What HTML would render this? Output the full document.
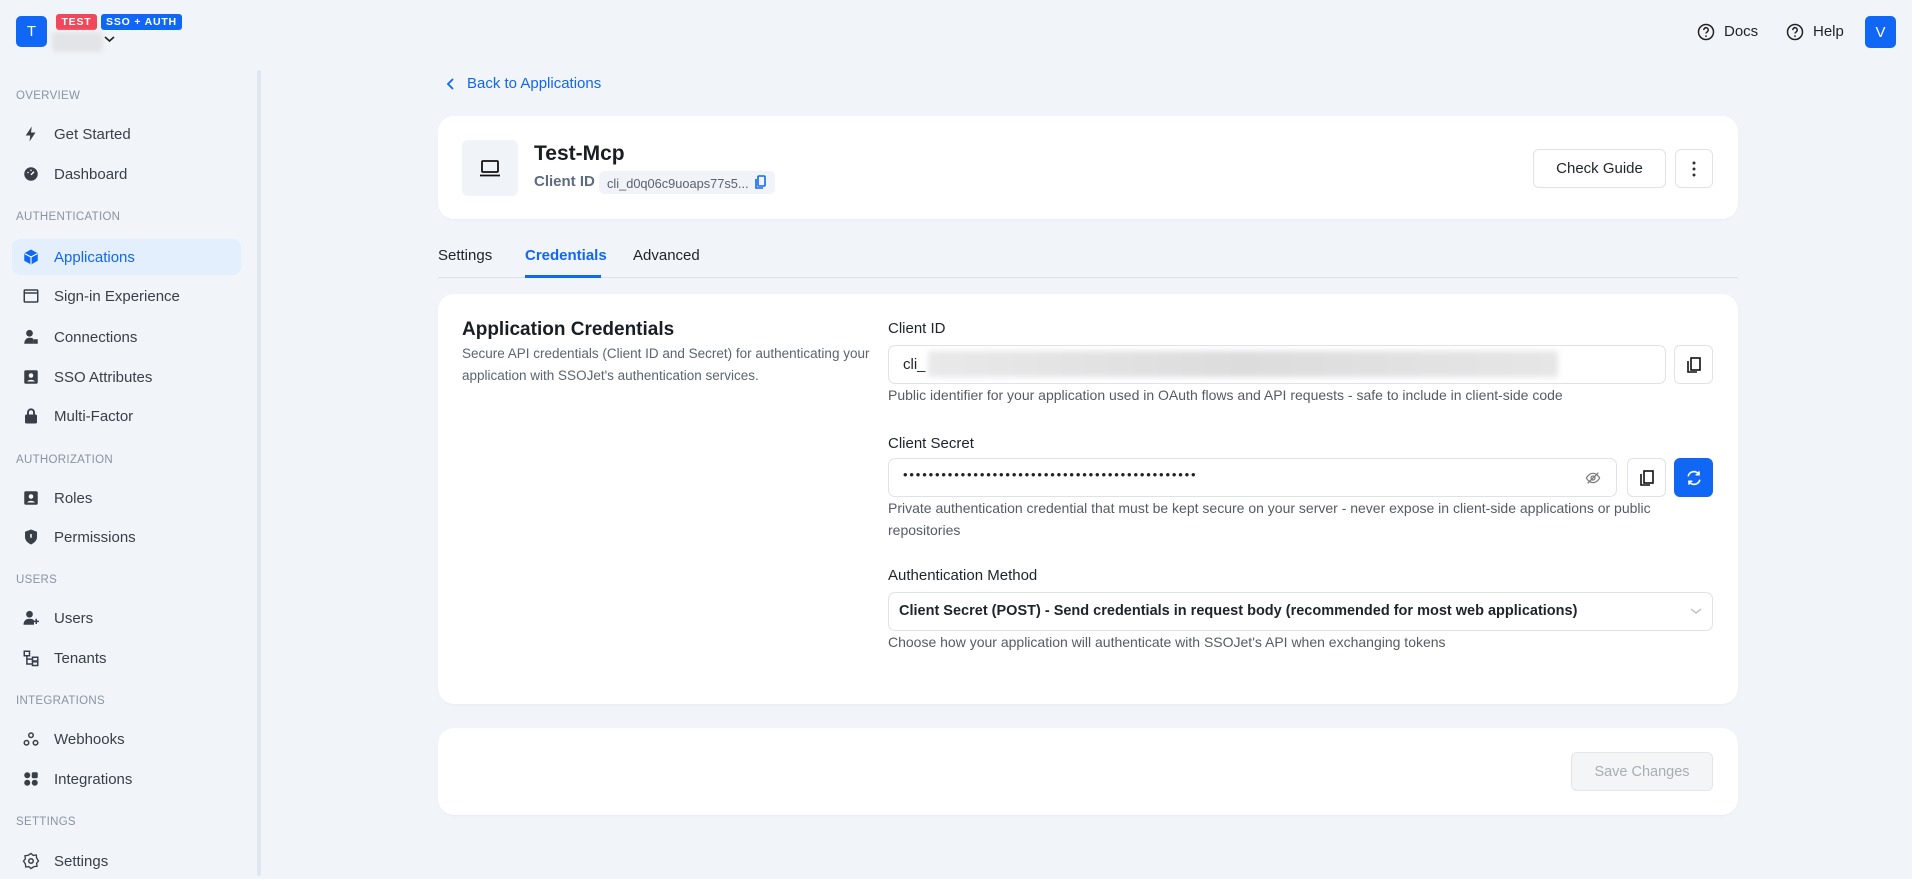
<!DOCTYPE html>
<html><head><meta charset="utf-8"><style>
*{box-sizing:border-box;margin:0;padding:0}
body{width:1912px;height:876px;overflow:hidden;background:#f1f4f9;font-family:"Liberation Sans",sans-serif;color:#1f2329;position:relative}
.abs{position:absolute}
.sec{position:absolute;left:16px;font-size:11.5px;color:#8a93a0;letter-spacing:.3px}
.item{position:absolute;left:12px;width:229px;height:36px;border-radius:8px;display:flex;align-items:center;font-size:15px;color:#3a3f47}
.item svg{position:absolute;left:10px;width:18px;height:18px}
.item span{position:absolute;left:42px}
.card{position:absolute;left:438px;width:1300px;background:#fff;border-radius:16px;box-shadow:0 1px 2px rgba(0,0,0,.04)}
.btn{position:absolute;border:1px solid #dfe2e7;border-radius:6px;background:#fff;display:flex;align-items:center;justify-content:center}
.inp{position:absolute;border:1px solid #dfe2e7;border-radius:7px;background:#fff}
.lbl{position:absolute;left:888px;font-size:15px;color:#1f2329}
.help{position:absolute;left:888px;font-size:14px;color:#555b64;line-height:22px}
</style></head><body>
<div class="abs" style="left:16px;top:16px;width:31px;height:31px;background:#1167f5;border-radius:5px;color:#fff;font-size:15px;display:flex;align-items:center;justify-content:center">T</div>
<div class="abs" style="left:56px;top:14px;width:41px;height:16px;background:#f0475a;border-radius:3px;color:#fff;font-size:10.5px;font-weight:bold;letter-spacing:.8px;text-align:center;line-height:16px">TEST</div>
<div class="abs" style="left:101px;top:14px;width:81px;height:16px;background:#1167f5;border-radius:3px;color:#fff;font-size:10.5px;font-weight:bold;letter-spacing:.8px;text-align:center;line-height:16px">SSO + AUTH</div>
<div class="abs" style="left:52px;top:32px;width:51px;height:20px;background:#e2e4e8;border-radius:4px;filter:blur(2px)"></div>
<svg class="abs" style="left:103px;top:34px" width="13" height="10" viewBox="0 0 13 10"><path d="M2 3l4.5 4 4.5-4" fill="none" stroke="#222" stroke-width="1.6"/></svg>
<div class="abs" style="left:257px;top:70px;width:4px;height:806px;background:#e1e6ee;border-radius:2px"></div>

<div class="sec" style="top:90px">OVERVIEW</div>
<div class="item" style="top:116px"><svg viewBox="0 0 24 24"><path d="M13 2L5 14h6l-1 8 8-12h-6z" fill="#3a3f47"/></svg><span>Get Started</span></div>
<div class="item" style="top:156px"><svg viewBox="0 0 24 24"><circle cx="12" cy="12" r="9" fill="#3a3f47"/><path d="M12 13l4-4" stroke="#fff" stroke-width="2"/><circle cx="8" cy="10" r="1" fill="#fff"/><circle cx="12" cy="7" r="1" fill="#fff"/></svg><span>Dashboard</span></div>
<div class="sec" style="top:211px">AUTHENTICATION</div>
<div class="item" style="top:239px;background:#e3effd;color:#1167f5"><svg viewBox="0 0 24 24"><path d="M12 2l9 5v10l-9 5-9-5V7z" fill="#1167f5"/><path d="M3.5 7.5L12 12l8.5-4.5M12 12v9.5" stroke="#fff" stroke-width="1.5" fill="none"/></svg><span>Applications</span></div>
<div class="item" style="top:278px"><svg viewBox="0 0 24 24"><rect x="3" y="4" width="18" height="16" rx="1" fill="none" stroke="#3a3f47" stroke-width="2"/><path d="M3 8h18" stroke="#3a3f47" stroke-width="2"/></svg><span>Sign-in Experience</span></div>
<div class="item" style="top:319px"><svg viewBox="0 0 24 24"><circle cx="10" cy="7" r="4.5" fill="#3a3f47"/><path d="M3 21c0-5 3-8 7-8s5 1 5 2v6z" fill="#3a3f47"/><rect x="15" y="15" width="6" height="6" fill="#3a3f47"/></svg><span>Connections</span></div>
<div class="item" style="top:359px"><svg viewBox="0 0 24 24"><rect x="3" y="3" width="18" height="18" rx="2" fill="#3a3f47"/><circle cx="12" cy="10" r="3" fill="#fff"/><path d="M7 18c1-3 9-3 10 0" fill="#fff"/></svg><span>SSO Attributes</span></div>
<div class="item" style="top:398px"><svg viewBox="0 0 24 24"><rect x="4" y="10" width="16" height="12" rx="2" fill="#3a3f47"/><path d="M8 10V7a4 4 0 018 0v3" stroke="#3a3f47" stroke-width="2.5" fill="none"/></svg><span>Multi-Factor</span></div>
<div class="sec" style="top:454px">AUTHORIZATION</div>
<div class="item" style="top:480px"><svg viewBox="0 0 24 24"><rect x="3" y="3" width="18" height="18" rx="2" fill="#3a3f47"/><circle cx="12" cy="10" r="3" fill="#fff"/><path d="M7 18c1-3 9-3 10 0" fill="#fff"/></svg><span>Roles</span></div>
<div class="item" style="top:519px"><svg viewBox="0 0 24 24"><path d="M12 2l8 3v7c0 5-4 8-8 10-4-2-8-5-8-10V5z" fill="#3a3f47"/><path d="M12 8v5" stroke="#fff" stroke-width="2"/></svg><span>Permissions</span></div>
<div class="sec" style="top:574px">USERS</div>
<div class="item" style="top:600px"><svg viewBox="0 0 24 24"><circle cx="10" cy="7" r="4.5" fill="#3a3f47"/><path d="M2 21c0-5 3-8 8-8s6 2 6 3v5z" fill="#3a3f47"/><path d="M19 13v7M15.5 16.5h7" stroke="#3a3f47" stroke-width="2"/></svg><span>Users</span></div>
<div class="item" style="top:640px"><svg viewBox="0 0 24 24"><rect x="3" y="3" width="7" height="6" fill="none" stroke="#3a3f47" stroke-width="2"/><rect x="14" y="11" width="7" height="5" fill="none" stroke="#3a3f47" stroke-width="2"/><rect x="14" y="17" width="7" height="5" fill="none" stroke="#3a3f47" stroke-width="2"/><path d="M6.5 9v11h7M6.5 13.5h7" stroke="#3a3f47" stroke-width="2" fill="none"/></svg><span>Tenants</span></div>
<div class="sec" style="top:695px">INTEGRATIONS</div>
<div class="item" style="top:721px"><svg viewBox="0 0 24 24"><circle cx="12" cy="7" r="3" fill="none" stroke="#3a3f47" stroke-width="2"/><circle cx="6" cy="17" r="3" fill="none" stroke="#3a3f47" stroke-width="2"/><circle cx="18" cy="17" r="3" fill="none" stroke="#3a3f47" stroke-width="2"/></svg><span>Webhooks</span></div>
<div class="item" style="top:761px"><svg viewBox="0 0 24 24"><circle cx="7" cy="7" r="4" fill="#3a3f47"/><circle cx="7" cy="17" r="4" fill="#3a3f47"/><circle cx="17" cy="17" r="4" fill="#3a3f47"/><rect x="13" y="3" width="8" height="8" rx="2" fill="#3a3f47"/></svg><span>Integrations</span></div>
<div class="sec" style="top:816px">SETTINGS</div>
<div class="item" style="top:843px"><svg viewBox="0 0 24 24"><circle cx="12" cy="12" r="3" fill="none" stroke="#3a3f47" stroke-width="2"/><path d="M12 2l3 2.5 4-.5.5 4L22 12l-2.5 3 .5 4-4 .5L12 22l-3-2.5-4 .5-.5-4L2 12l2.5-3-.5-4 4-.5z" fill="none" stroke="#3a3f47" stroke-width="1.8"/></svg><span>Settings</span></div>

<svg class="abs" style="left:1697px;top:23px" width="18" height="18" viewBox="0 0 24 24"><circle cx="12" cy="12" r="10" fill="none" stroke="#222" stroke-width="2"/><path d="M9 9.5a3 3 0 115 2c-1 .8-2 1.3-2 2.5" fill="none" stroke="#222" stroke-width="2"/><circle cx="12" cy="17.5" r="1.2" fill="#222"/></svg>
<div class="abs" style="left:1724px;top:23px;font-size:15px">Docs</div>
<svg class="abs" style="left:1786px;top:23px" width="18" height="18" viewBox="0 0 24 24"><circle cx="12" cy="12" r="10" fill="none" stroke="#222" stroke-width="2"/><path d="M9 9.5a3 3 0 115 2c-1 .8-2 1.3-2 2.5" fill="none" stroke="#222" stroke-width="2"/><circle cx="12" cy="17.5" r="1.2" fill="#222"/></svg>
<div class="abs" style="left:1813px;top:23px;font-size:15px">Help</div>
<div class="abs" style="left:1865px;top:16px;width:31px;height:32px;background:#1167f5;border-radius:5px;color:#fff;font-size:15px;display:flex;align-items:center;justify-content:center">V</div>

<svg class="abs" style="left:444px;top:77px" width="14" height="14" viewBox="0 0 14 14"><path d="M9 2L4 7l5 5" fill="none" stroke="#1167f5" stroke-width="1.8"/></svg>
<div class="abs" style="left:467px;top:75px;font-size:15px;color:#1167f5">Back to Applications</div>

<div class="card" style="top:116px;height:103px"></div>
<div class="abs" style="left:462px;top:140px;width:56px;height:56px;background:#f0f3f7;border-radius:6px"></div>
<svg class="abs" style="left:478px;top:156px" width="24" height="24" viewBox="0 0 24 24"><rect x="4" y="5" width="16" height="11" rx="1" fill="none" stroke="#111" stroke-width="1.8"/><path d="M2 19.5h20" stroke="#111" stroke-width="1.8"/></svg>
<div class="abs" style="left:534px;top:142px;font-size:21px;font-weight:bold;color:#1a1d22">Test-Mcp</div>
<div class="abs" style="left:534px;top:173px;font-size:15px;font-weight:bold;color:#5b6b80">Client ID</div>
<div class="abs" style="left:599px;top:171px;width:176px;height:23px;background:#f0f3f7;border-radius:5px;font-size:12.8px;color:#5a6270;padding:5px 0 0 8px">cli_d0q06c9uoaps77s5...</div>
<svg class="abs" style="left:755px;top:175px" width="12" height="14" viewBox="0 0 12 14"><rect x="3" y="1" width="7" height="10" rx="1" fill="none" stroke="#1167f5" stroke-width="1.6"/><path d="M1 4v9h7" fill="none" stroke="#1167f5" stroke-width="1.6"/></svg>
<div class="btn" style="left:1533px;top:149px;width:133px;height:39px;font-size:15px;color:#1f2329">Check Guide</div>
<div class="btn" style="left:1675px;top:149px;width:38px;height:39px"><svg width="4" height="16" viewBox="0 0 4 16"><circle cx="2" cy="2" r="1.5" fill="#333"/><circle cx="2" cy="8" r="1.5" fill="#333"/><circle cx="2" cy="14" r="1.5" fill="#333"/></svg></div>

<div class="abs" style="left:438px;top:247px;font-size:15px;color:#1f2329">Settings</div>
<div class="abs" style="left:525px;top:247px;font-size:15px;color:#1167f5;font-weight:bold">Credentials</div>
<div class="abs" style="left:633px;top:247px;font-size:15px;color:#1f2329">Advanced</div>
<div class="abs" style="left:438px;top:277px;width:1300px;height:1px;background:#dde1e7"></div>
<div class="abs" style="left:525px;top:275px;width:76px;height:3px;background:#1167f5"></div>

<div class="card" style="top:294px;height:410px"></div>
<div class="abs" style="left:462px;top:319px;font-size:19px;font-weight:bold;color:#1a1d22">Application Credentials</div>
<div class="abs" style="left:462px;top:343px;font-size:13.5px;color:#5b6470;line-height:22px;width:420px">Secure API credentials (Client ID and Secret) for authenticating your application with SSOJet's authentication services.</div>

<div class="lbl" style="top:320px">Client ID</div>
<div class="inp" style="left:888px;top:345px;width:778px;height:39px"></div>
<div class="abs" style="left:903px;top:356px;font-size:15px">cli_</div>
<div class="abs" style="left:928px;top:351px;width:630px;height:26px;background:linear-gradient(90deg,#e9e9ea,#dcdcdd 50%,#e6e6e7);filter:blur(3px)"></div>
<div class="btn" style="left:1674px;top:345px;width:39px;height:39px"><svg width="16" height="18" viewBox="0 0 16 18"><rect x="5" y="2" width="9" height="12" fill="none" stroke="#111" stroke-width="1.6"/><path d="M2 5v11h9" fill="none" stroke="#111" stroke-width="1.6"/></svg></div>
<div class="help" style="top:384px">Public identifier for your application used in OAuth flows and API requests - safe to include in client-side code</div>

<div class="lbl" style="top:435px">Client Secret</div>
<div class="inp" style="left:888px;top:458px;width:729px;height:39px"></div>
<div class="abs" style="left:903px;top:467px;font-size:13px;letter-spacing:1.85px;color:#222">••••••••••••••••••••••••••••••••••••••••••••••</div>
<svg class="abs" style="left:1585px;top:470px" width="16" height="16" viewBox="0 0 24 24"><path d="M2 12s4-7 10-7 10 7 10 7-4 7-10 7S2 12 2 12z" fill="none" stroke="#777" stroke-width="1.8"/><circle cx="12" cy="12" r="3" fill="none" stroke="#777" stroke-width="1.8"/><path d="M4 20L20 4" stroke="#777" stroke-width="1.8"/></svg>
<div class="btn" style="left:1627px;top:458px;width:39px;height:39px"><svg width="16" height="18" viewBox="0 0 16 18"><rect x="5" y="2" width="9" height="12" fill="none" stroke="#111" stroke-width="1.6"/><path d="M2 5v11h9" fill="none" stroke="#111" stroke-width="1.6"/></svg></div>
<div class="btn" style="left:1674px;top:458px;width:39px;height:39px;background:#1167f5;border-color:#1167f5"><svg width="20" height="20" viewBox="0 0 24 24"><path d="M5 10a7 7 0 0113-2M19 14a7 7 0 01-13 2" fill="none" stroke="#fff" stroke-width="2"/><path d="M18 4v4h-4M6 20v-4h4" fill="none" stroke="#fff" stroke-width="2"/></svg></div>
<div class="help" style="top:497px;width:820px">Private authentication credential that must be kept secure on your server - never expose in client-side applications or public repositories</div>

<div class="lbl" style="top:567px">Authentication Method</div>
<div class="inp" style="left:888px;top:592px;width:825px;height:39px"></div>
<div class="abs" style="left:899px;top:603px;font-size:14.5px;font-weight:bold;color:#1f2329">Client Secret (POST) - Send credentials in request body (recommended for most web applications)</div>
<svg class="abs" style="left:1690px;top:606px" width="12" height="10" viewBox="0 0 12 10"><path d="M1 3l5 4 5-4" fill="none" stroke="#bbb" stroke-width="1.3"/></svg>
<div class="help" style="top:631px">Choose how your application will authenticate with SSOJet's API when exchanging tokens</div>

<div class="card" style="top:728px;height:87px"></div>
<div class="abs" style="left:1571px;top:752px;width:142px;height:39px;border:1px solid #e3e5e8;border-radius:6px;background:#f4f5f7;color:#a8adb5;font-size:14.5px;display:flex;align-items:center;justify-content:center">Save Changes</div>
</body></html>
